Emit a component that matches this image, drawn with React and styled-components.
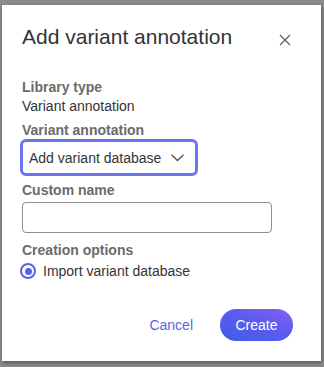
import { styled, createGlobalStyle } from 'styled-components';

const GlobalStyle = createGlobalStyle`
  html, body {
    margin: 0;
    padding: 0;
    background: #8b8b8b;
    font-family: "Liberation Sans", Arial, sans-serif;
  }
`;

// Fondo gris que deja ver el modal
const Backdrop = styled.div`
  width: 324px;
  height: 367px;
  box-sizing: border-box;
  padding: 5px 3px 6px 2px;
  background: #8b8b8b;
`;

const Modal = styled.div`
  width: 319px;
  height: 356px;
  box-sizing: border-box;
  background: #fff;
  padding: 20px 28px 20px 20px;
  box-shadow: 1px 2px 4px rgba(0, 0, 0, 0.35);
  display: flex;
  flex-direction: column;
`;

const Header = styled.div`
  display: flex;
  justify-content: space-between;
  align-items: flex-start;
`;

const Title = styled.h2`
  margin: 0;
  font-size: 21px;
  line-height: 24px;
  font-weight: 400;
  color: #333;
`;

const CloseButton = styled.button`
  border: 0;
  background: none;
  padding: 0;
  margin: 9px 2px 0 0;
  width: 12px;
  height: 12px;
  display: flex;
  cursor: pointer;
`;

const Label = styled.div`
  font-size: 14px;
  line-height: 16px;
  font-weight: 700;
  color: #6b6b6b;
  margin-top: ${(p) => p.$gap || 0}px;
`;

const Value = styled.div`
  font-size: 14px;
  line-height: 16px;
  color: #333;
  margin-top: 3px;
`;

const Select = styled.div`
  margin-top: 1px;
  margin-left: -2px;
  width: 178px;
  height: 37px;
  box-sizing: border-box;
  border: 3px solid #6c74ef;
  border-radius: 6px;
  padding: 0 11px 0 6px;
  display: flex;
  align-items: center;
  justify-content: space-between;
  font-size: 14px;
  line-height: 16px;
  color: #333;
`;

const TextInput = styled.input`
  margin-top: 4px;
  width: 250px;
  height: 31px;
  box-sizing: border-box;
  border: 1px solid #8e8e8e;
  border-radius: 4px;
  padding: 0 8px;
  font-family: inherit;
  font-size: 14px;
  outline: none;
`;

const RadioRow = styled.label`
  margin-top: 5px;
  margin-left: -2px;
  display: flex;
  align-items: center;
  gap: 7px;
  font-size: 14px;
  line-height: 16px;
  color: #333;
`;

const RadioDot = styled.span`
  width: 16px;
  height: 16px;
  box-sizing: border-box;
  border: 2px solid #5662e8;
  border-radius: 50%;
  display: flex;
  align-items: center;
  justify-content: center;

  &::after {
    content: '';
    width: 7px;
    height: 7px;
    border-radius: 50%;
    background: #5662e8;
  }
`;

const Actions = styled.div`
  margin-top: auto;
  display: flex;
  justify-content: flex-end;
  align-items: center;
  gap: 27px;
`;

const TextButton = styled.button`
  border: 0;
  background: none;
  padding: 0;
  font-family: inherit;
  font-size: 14px;
  line-height: 16px;
  color: #5b64e6;
  cursor: pointer;
`;

const PrimaryButton = styled.button`
  border: 0;
  height: 32px;
  width: 73px;
  border-radius: 16px;
  background: linear-gradient(20deg, #3f5ce6 0%, #5a5cf0 55%, #8a5ef2 100%);
  color: #fff;
  font-family: inherit;
  font-size: 14px;
  cursor: pointer;
`;

const Chevron = () => (
  <svg width="13" height="8" viewBox="0 0 13 8" fill="none">
    <path d="M1 1.2l5.5 5.3L12 1.2" stroke="#555" strokeWidth="1.5" strokeLinecap="round" />
  </svg>
);

export default function App() {
  return (
    <>
      <GlobalStyle />
      <Backdrop>
        <Modal>
          <Header>
            <Title>Add variant annotation</Title>
            <CloseButton aria-label="Close">
              <svg width="12" height="12" viewBox="0 0 12 12">
                <path d="M1 1l10 10M11 1L1 11" stroke="#666" strokeWidth="1.4" />
              </svg>
            </CloseButton>
          </Header>

          <Label $gap={30}>Library type</Label>
          <Value>Variant annotation</Value>

          <Label $gap={8}>Variant annotation</Label>
          <Select>
            <span>Add variant database</span>
            <Chevron />
          </Select>

          <Label $gap={6}>Custom name</Label>
          <TextInput type="text" />

          <Label $gap={9}>Creation options</Label>
          <RadioRow>
            <RadioDot />
            Import variant database
          </RadioRow>

          <Actions>
            <TextButton>Cancel</TextButton>
            <PrimaryButton>Create</PrimaryButton>
          </Actions>
        </Modal>
      </Backdrop>
    </>
  );
}
